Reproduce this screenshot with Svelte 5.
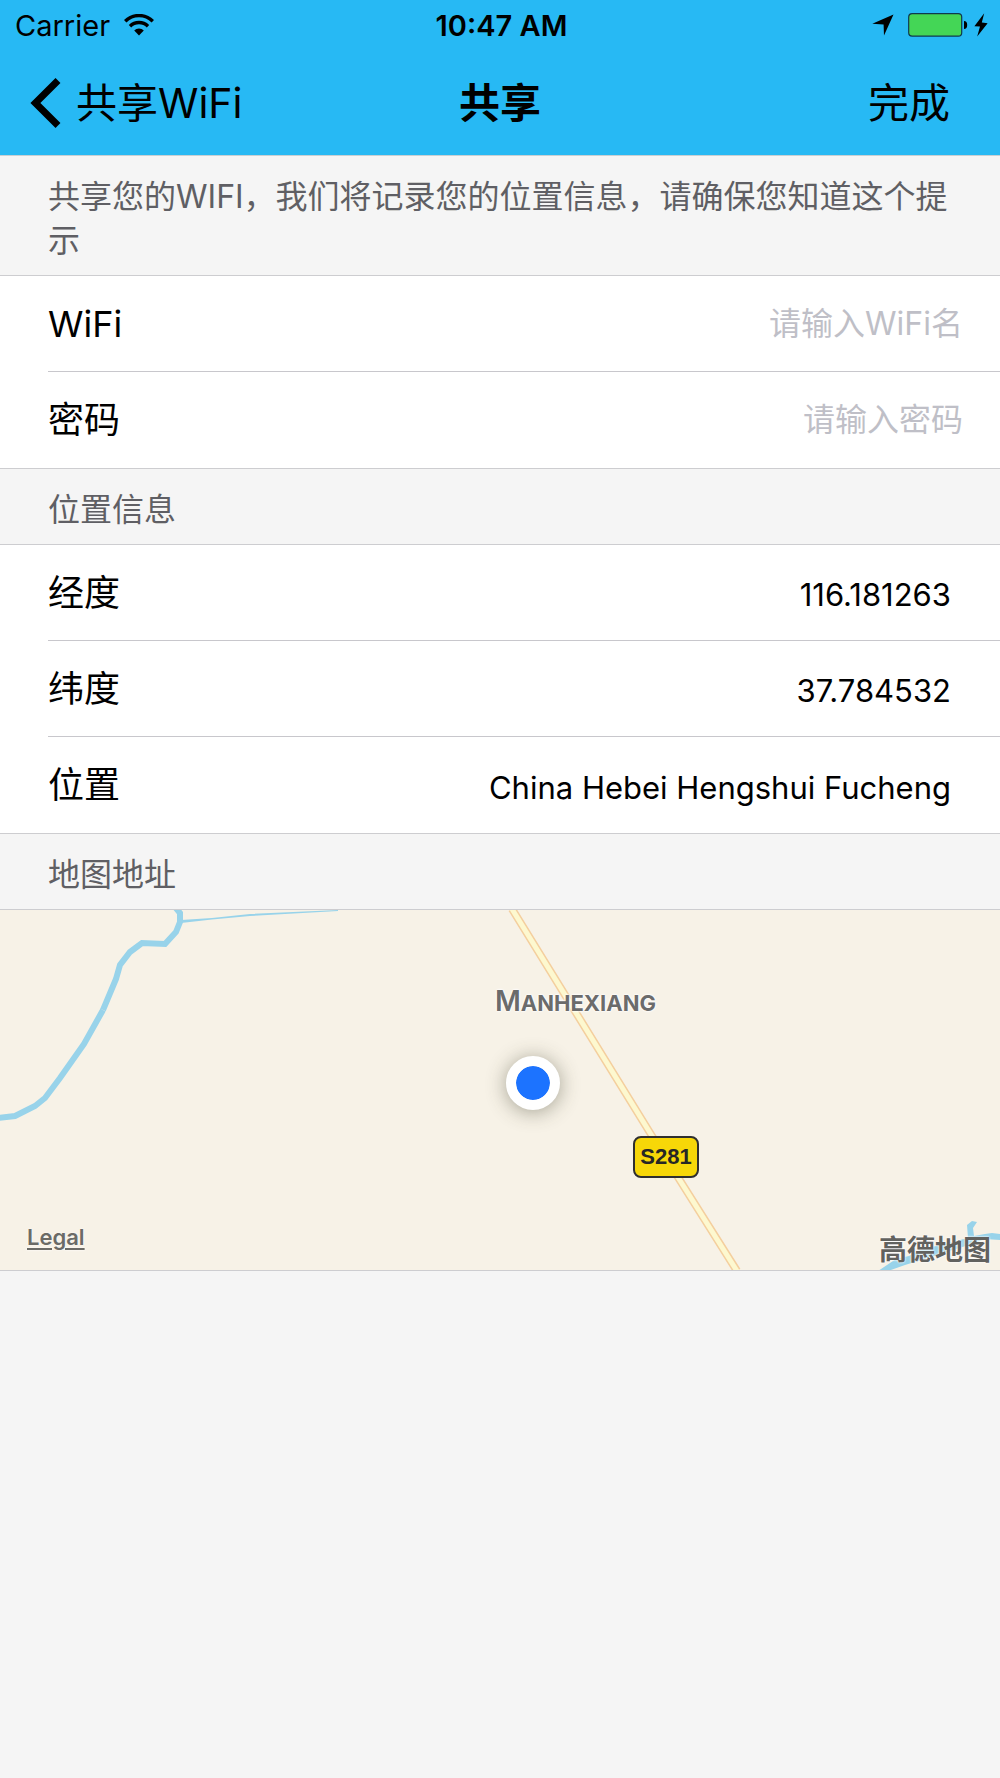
<script lang="ts">
    let ssid = '';
    let password = '';

    const location = [
        { label: '经度', value: '116.181263' },
        { label: '纬度', value: '37.784532' },
        { label: '位置', value: 'China Hebei Hengshui Fucheng' },
    ];
</script>

<svelte:head>
    <title>共享</title>
</svelte:head>

<header>
    <div class="status">
        <div class="carrier">
            <span>Carrier</span>
            <svg width="30" height="22" viewBox="0 0 30 22" aria-hidden="true">
                <g fill="none" stroke="#000" stroke-width="3.4">
                    <path d="M1.2 7.2a19.6 19.6 0 0 1 27.6 0" />
                    <path d="M6 12.2a12.9 12.9 0 0 1 18 0" />
                </g>
                <path d="M10.2 16.6a6.8 6.8 0 0 1 9.6 0L15 21.6z" />
            </svg>
        </div>
        <time>10:47 AM</time>
        <div class="power">
            <svg width="22" height="22" viewBox="0 0 22 22" aria-hidden="true">
                <path d="M21.5 0.5L12 21.5L11.6 10.4L0.3 9.8z" />
            </svg>
            <svg class="battery" width="60" height="24" viewBox="0 0 60 24" aria-hidden="true">
                <rect x="0.7" y="0.7" width="53" height="22.4" rx="3.4" fill="#44d656" stroke="#103a4c" stroke-width="1.2" />
                <path d="M56 8a3.2 4 0 0 1 0 8z" />
            </svg>
            <svg width="14" height="24" viewBox="0 0 14 24" aria-hidden="true">
                <path d="M10.2 0.3L0.4 13.2L6 13.6L3.2 23.6L13.6 10.2L7.8 9.6z" />
            </svg>
        </div>
    </div>

    <nav>
        <button class="back">
            <svg width="32" height="52" viewBox="0 0 32 52" aria-hidden="true">
                <path d="M28 3.6L5.4 26L28 48.4" fill="none" stroke="#000" stroke-width="7" />
            </svg>
            共享WiFi
        </button>
        <h1>共享</h1>
        <button class="done">完成</button>
    </nav>
</header>

<main>
    <p class="notice">共享您的WIFI，我们将记录您的位置信息，请确保您知道这个提示</p>
    <form class="group">
        <div class="row">
            <label for="ssid">WiFi</label>
            <input id="ssid" type="text" placeholder="请输入WiFi名" bind:value={ssid} />
        </div>
        <div class="row">
            <label for="password">密码</label>
            <input id="password" type="password" placeholder="请输入密码" bind:value={password} />
        </div>
    </form>

    <h2>位置信息</h2>
    <dl class="group">
        {#each location as item}
            <div class="row">
                <dt>{item.label}</dt>
                <dd>{item.value}</dd>
            </div>
        {/each}
    </dl>

    <h2>地图地址</h2>
    <div class="group map">
        <svg class="tiles" viewBox="0 0 1000 360" preserveAspectRatio="xMidYMid slice" aria-hidden="true">
            <g fill="none" stroke="#98d3ea" stroke-linejoin="miter">
                <path d="M-2 208L15 206L35 196L45 188L60 168L84 134L103 100" stroke-width="6" />
                <path d="M103 100L116 69L120 55L130 42L142 33L165 34L176 22L180 12L180 3L175 -3" stroke-width="6" />
            </g>
            <path d="M181 10L212 8L250 4L338 0L338 1L250 6L212 9.5L181 13z" fill="#98d3ea" />
            <path d="M878 361L896 349L909 346L920 340L968 328L967 315L972 311L977 312L973 318L974 326L985 324L992 323L1000 324V330L985 329L972 334L905 355L888 361z" fill="#98d3ea" />
            <path d="M512 -1L652 226L737 361" fill="none" stroke="#f4cf9e" stroke-width="8" />
            <path d="M512 -1L652 226L737 361" fill="none" stroke="#fdf8cf" stroke-width="5" />
        </svg>
        <span class="town">Manhexiang</span>
        <span class="pin"></span>
        <span class="road">S281</span>
        <a class="legal" href="#legal">Legal</a>
        <span class="vendor">高德地图</span>
    </div>
</main>

<style>
    :global(body) {
        margin: 0;
        background: #f5f5f5;
        color: #000;
        font-family: Inter, 'Noto Sans CJK SC', sans-serif;
    }

    svg {
        display: block;
    }

    header {
        background: #27b9f4;
        border-bottom: 1px solid #c8d0d4;
    }

    .status,
    nav {
        display: grid;
        grid-template-columns: 1fr auto 1fr;
        align-items: center;
    }

    .status {
        height: 50px;
        padding: 0 12px 0 15px;
        font-size: 29px;
    }

    .carrier,
    .power {
        display: flex;
        align-items: center;
        gap: 14px;
    }

    .power {
        justify-content: flex-end;
    }

    .battery {
        margin-right: -8px;
    }

    time {
        font-weight: 600;
    }

    nav {
        height: 105px;
        padding: 0 30px;
    }

    button {
        display: flex;
        align-items: center;
        gap: 14px;
        padding: 0;
        border: none;
        background: none;
        color: inherit;
        font: inherit;
        font-size: 41px;
        line-height: 60px;
    }

    .done {
        justify-self: end;
        padding-right: 20px;
    }

    h1 {
        margin: 0;
        font-size: 41px;
        font-weight: 600;
        line-height: 60px;
    }

    h2,
    .notice {
        margin: 0;
        padding: 19px 48px 12px;
        color: #5f5f64;
        font-size: 32px;
        font-weight: 400;
        line-height: 44px;
    }

    .group {
        margin: 0;
        border-top: 1px solid #cdcdd0;
        border-bottom: 1px solid #cdcdd0;
        background: #fff;
    }

    .row {
        display: flex;
        align-items: center;
        box-sizing: border-box;
        height: 96px;
        margin-left: 48px;
        padding-right: 49px;
    }

    .row:not(:last-child) {
        border-bottom: 1px solid #c8c7cc;
    }

    form .row {
        padding-right: 37px;
    }

    label,
    dt {
        flex: none;
        font-size: 36px;
        line-height: 54px;
    }

    input,
    dd {
        flex: 1;
        min-width: 0;
        margin: 0;
        text-align: right;
        font-size: 32px;
    }

    dd {
        padding-top: 4px;
        font-size: 31px;
    }

    input {
        padding: 0;
        border: none;
        outline: none;
        background: none;
        color: inherit;
        font-family: inherit;
        line-height: 48px;
    }

    input::placeholder {
        color: #bfbfc7;
        opacity: 1;
    }

    .map {
        position: relative;
        height: 360px;
        overflow: hidden;
        background: #f7f2e7;
    }

    .tiles {
        width: 100%;
        height: 100%;
    }

    .map span,
    .legal {
        position: absolute;
    }

    .town {
        top: 72px;
        left: 495px;
        color: #6b6b6b;
        font-size: 22px;
        font-weight: 700;
        line-height: 38px;
        text-transform: uppercase;
        text-shadow: 0 0 2px #fff, 0 0 2px #fff, 0 0 3px #fff;
    }

    .town::first-letter {
        font-size: 28px;
        font-weight: 600;
    }

    .pin {
        top: 146px;
        left: 506px;
        width: 34px;
        height: 34px;
        border: 10px solid #fff;
        border-radius: 50%;
        background: #1c73ff;
        background-clip: padding-box;
        box-shadow: 0 2px 20px rgba(60, 60, 40, 0.45);
    }

    .road {
        top: 226px;
        left: 633px;
        box-sizing: border-box;
        width: 66px;
        height: 42px;
        border: 2px solid #2f2f2f;
        border-radius: 8px;
        background: #f7d708;
        color: #262626;
        font-family: 'Liberation Sans Narrow', 'Liberation Sans', sans-serif;
        font-size: 22px;
        font-weight: 700;
        line-height: 38px;
        text-align: center;
    }

    .legal {
        bottom: 18px;
        left: 27px;
        color: #6b6b67;
        font-size: 22px;
        font-weight: 600;
        line-height: 30px;
        text-shadow: 0 0 2px #fff;
        text-underline-offset: 3px;
    }

    .vendor {
        right: 9px;
        bottom: 0;
        color: #62625f;
        font-size: 28px;
        font-weight: 700;
        line-height: 40px;
        text-shadow: 0 0 2px #fff, 0 0 2px #fff;
    }
</style>
